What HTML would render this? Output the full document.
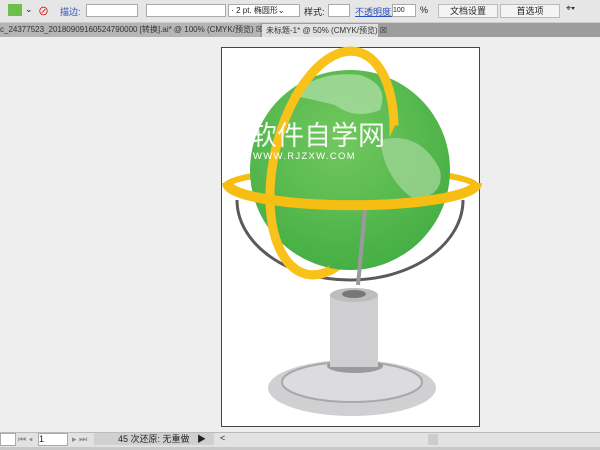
<!DOCTYPE html>
<html><head><meta charset="utf-8"><style>
body{margin:0;width:600px;height:450px;overflow:hidden;background:#eeeeee;font-family:"Liberation Sans","Noto Sans CJK SC",sans-serif;font-size:9px;color:#222;position:relative}
.a{position:absolute}
.box{position:absolute;background:#fff;border:1px solid #aaa;height:11px}
.btn{position:absolute;background:#f4f4f4;border:1px solid #bbb;height:12px;text-align:center;line-height:12px}
</style></head><body>
<div class="a" style="left:0;top:0;width:600px;height:22px;background:#e6e6e6;border-bottom:1px solid #ccc"></div>
<div class="a" style="left:8px;top:4px;width:14px;height:12px;background:#6cc04a"></div>
<div class="a" style="left:25px;top:4px">⌄</div>
<div class="a" style="left:38px;top:3px;color:#c00;font-size:11px">⊘</div>
<div class="a" style="left:60px;top:5px;color:#2a50c0">描边:</div>
<div class="box" style="left:86px;top:4px;width:50px"></div>
<div class="box" style="left:146px;top:4px;width:78px"></div>
<div class="box" style="left:228px;top:4px;width:70px;font-size:8px;line-height:11px">&nbsp;· 2 pt. 椭圆形⌄</div>
<div class="a" style="left:304px;top:5px">样式:</div>
<div class="box" style="left:328px;top:4px;width:20px"></div>
<div class="a" style="left:355px;top:5px;color:#2a50c0;text-decoration:underline">不透明度:</div>
<div class="box" style="left:392px;top:4px;width:22px;font-size:7px;line-height:11px">100</div>
<div class="a" style="left:420px;top:5px">%</div>
<div class="btn" style="left:438px;top:4px;width:58px">文档设置</div>
<div class="btn" style="left:500px;top:4px;width:58px">首选项</div>
<div class="a" style="left:566px;top:3px">⌖▾</div>
<div class="a" style="left:0;top:23px;width:600px;height:14px;background:#9d9d9d"></div>
<div class="a" style="left:0;top:23px;width:260px;height:14px;background:#b5b5b5;color:#333;font-size:8px;line-height:14px;white-space:nowrap">c_24377523_20180909160524790000 [转换].ai* @ 100% (CMYK/预览) ☒</div>
<div class="a" style="left:262px;top:24px;width:112px;height:13px;background:#e0e0e0;color:#333;font-size:8px;line-height:13px;white-space:nowrap;padding-left:4px">未标题-1* @ 50% (CMYK/预览) ☒</div>
<div class="a" style="left:221px;top:47px;width:257px;height:378px;background:#fff;border:1px solid #444"></div>
<svg class="a" style="left:0;top:0" width="600" height="450">
<defs><radialGradient id="g" cx="0.45" cy="0.35" r="0.7"><stop offset="0" stop-color="#72c85e"/><stop offset="1" stop-color="#42ad43"/></radialGradient>
<clipPath id="front"><polygon points="200,40 500,40 500,100 385,112 345,300 200,300"/></clipPath></defs>
<ellipse cx="352" cy="388" rx="84" ry="28" fill="#d0d0d2"/>
<ellipse cx="352" cy="382" rx="70" ry="20" fill="#dcdcde" stroke="#a8a8aa" stroke-width="2"/>
<ellipse cx="355" cy="366" rx="28" ry="7" fill="#9a9a9c"/>
<rect x="330" y="295" width="48" height="72" fill="#cfcfd1"/>
<ellipse cx="354" cy="295" rx="24" ry="7" fill="#bdbdbf"/>
<ellipse cx="354" cy="294" rx="12" ry="4" fill="#777"/>
<path d="M237 200 A113 80 0 0 0 463 200" fill="none" stroke="#5a5a5c" stroke-width="3"/>
<ellipse cx="332" cy="163" rx="58" ry="114" transform="rotate(13 332 163)" fill="none" stroke="#f8c21a" stroke-width="9"/>
<path d="M226 185 A126 18 0 0 1 476 185" fill="none" stroke="#f6bd12" stroke-width="6"/>
<circle cx="350" cy="170" r="100" fill="url(#g)"/>
<path d="M290 95 q30 -25 70 -20 q30 10 20 35 q-25 10 -45 -5 q-20 -5 -45 -10z" fill="#a9dca0" opacity=".8"/>
<path d="M380 140 q40 -10 60 30 q5 25 -25 30 q-30 -20 -35 -60z" fill="#9ed494" opacity=".8"/>
<path d="M365 210 L358 285" stroke="#9a9a9c" stroke-width="4"/>
<ellipse cx="332" cy="163" rx="58" ry="114" transform="rotate(13 332 163)" fill="none" stroke="#f8c21a" stroke-width="9" clip-path="url(#front)"/>
<path d="M227 183 A124 22 0 0 0 477 183" fill="none" stroke="#f6bd12" stroke-width="10"/>
<text x="250" y="145" font-size="27" fill="#fff" font-family="Noto Sans CJK SC,sans-serif" opacity=".92">软件自学网</text>
<text x="253" y="159" font-size="9.5" fill="#fff" letter-spacing="1.3">WWW.RJZXW.COM</text>
</svg>
<div class="a" style="left:0;top:432px;width:600px;height:14px;background:#e2e2e2;border-top:1px solid #bbb"></div>
<div class="box" style="left:0;top:433px;width:14px"></div>
<div class="a" style="left:18px;top:434px;color:#888">⏮ ◂</div>
<div class="box" style="left:38px;top:433px;width:28px;line-height:11px">1</div>
<div class="a" style="left:72px;top:434px;color:#888">▸ ⏭</div>
<div class="a" style="left:94px;top:433px;width:120px;height:12px;background:#d0d0d0;line-height:12px;padding-left:24px;box-sizing:border-box">45 次还原: 无重做 &nbsp;&nbsp;▶</div>
<div class="a" style="left:220px;top:433px">&lt;</div>
<div class="a" style="left:428px;top:434px;width:10px;height:11px;background:#ccc"></div>
<div class="a" style="left:0;top:447px;width:600px;height:3px;background:#c8c8c8"></div>
</body></html>
